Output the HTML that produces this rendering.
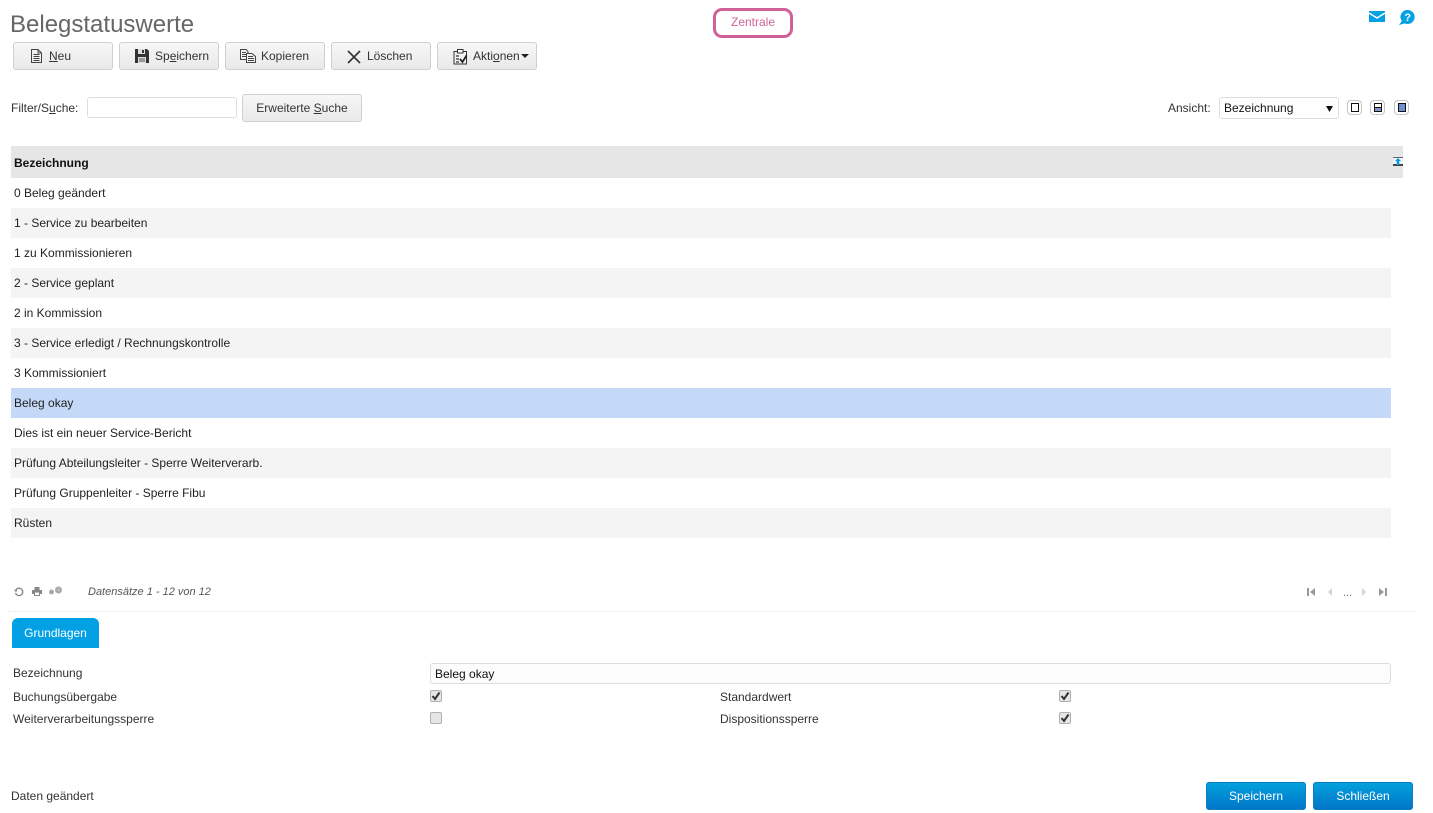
<!DOCTYPE html>
<html lang="de"><head><meta charset="utf-8"><title>Belegstatuswerte</title>
<style>
html,body{margin:0;padding:0;background:#fff}
body{width:1433px;height:813px;position:relative;overflow:hidden;font:12px/14px "Liberation Sans",Arial,sans-serif;color:#222}
.a{position:absolute;white-space:nowrap}
svg{position:absolute;display:block}
.btn{position:absolute;top:42px;width:98px;height:26px;border:1px solid #d0d0d0;border-radius:3px;background:linear-gradient(#f7f7f7,#e9e9e9);color:#333}
.btn span{position:absolute;top:6px;white-space:nowrap}
.row{position:absolute;left:11px;width:1380px;height:30px;line-height:30px;text-indent:3px;color:#222}
.g{background:#f4f4f4}
.vb{position:absolute;top:100px;width:13px;height:13px;border:1px solid #c4c4c4;border-radius:4px;background:#fff}
.vb i{position:absolute;left:2px;top:2px;width:7px;height:7px;border:1px solid #111;display:block}
.cb{position:absolute;width:10px;height:10px;border:1px solid #b0b0b0;border-radius:2px;background:#e6e6e6}
.cb svg{left:0;top:0}
.pri{position:absolute;top:782px;width:98px;height:26px;border:1px solid #0a7cc4;border-radius:3px;background:linear-gradient(#03a1dc,#0175c8);color:#fff;text-align:center;line-height:26px}
u{text-decoration:underline}
</style></head><body>
<div class="a" style="left:10px;top:11px;font-size:24px;line-height:28px;color:#666">Belegstatuswerte</div>
<div class="a" style="left:713px;top:8px;width:74px;height:24px;border:3px solid #cf6198;border-radius:9px;text-align:center;line-height:23px;color:#cf6198">Zentrale</div>

<svg style="left:1369px;top:11px" width="16" height="11" viewBox="0 0 16 11"><rect width="16" height="11" fill="#04a0e4"/><path d="M0 2L8 7L16 2" fill="none" stroke="#fff" stroke-width="1.500"/></svg>
<svg style="left:1398px;top:10px" width="17" height="15" viewBox="0 0 17 15"><path d="M9.800 0a7 7 0 1 1-3 13.400L1 15l2.800-3.900A7 7 0 0 1 9.800 0z" fill="#04a0e4"/><text x="9.800" y="11" text-anchor="middle" font-family="Liberation Sans" font-size="11" font-weight="bold" fill="#fff">?</text></svg>

<div class="btn" style="left:13px"><svg style="left:17px;top:6px" width="11" height="14" viewBox="0 0 11 14"><path d="M.5 .5H7L10.500 4V13.500H.5ZM7 .5V4H10.500M2.500 5.500H8.500M2.500 7.500H8.500M2.500 9.500H8.500M2.500 11.500H8.500" fill="none" stroke="#444"/></svg><span style="left:35px"><u>N</u>eu</span></div>
<div class="btn" style="left:119px"><svg style="left:15px;top:6px" width="14" height="14" viewBox="0 0 14 14"><path d="M0 0H12L14 2V14H0Z" fill="#333"/><rect x="3" y="0" width="7" height="5" fill="#ddd"/><rect x="7" y="1" width="2" height="3" fill="#333"/><rect x="3" y="8" width="8" height="6" fill="#ddd"/><path d="M4 10H10M4 12H10" stroke="#555"/></svg><span style="left:35px">Sp<u>e</u>ichern</span></div>
<div class="btn" style="left:225px"><svg style="left:14px;top:6px" width="16" height="14" viewBox="0 0 16 14"><path d="M.5.500H6L8 2.500V10.500H.5ZM2 3.500H6M2 5.500H6M2 7.500H6" fill="#f3f3f3" stroke="#444"/><path d="M6.500 4.500H12L15.500 7.500V13.500H6.500ZM8 7.500H13M8 9.500H14M8 11.500H14" fill="#f3f3f3" stroke="#444"/></svg><span style="left:35px">Kopieren</span></div>
<div class="btn" style="left:331px"><svg style="left:15px;top:7px" width="14" height="14" viewBox="0 0 14 14"><path d="M1 1L13 13M13 1L1 13" fill="none" stroke="#333" stroke-width="1.600"/></svg><span style="left:35px">Löschen</span></div>
<div class="btn" style="left:437px"><svg style="left:15px;top:5px" width="15" height="17" viewBox="0 0 15 17"><path d="M1 3.500H13.500V16H1Z" fill="#f3f3f3" stroke="#333"/><path d="M4.500 1.500H10V5H4.500Z" fill="#fff" stroke="#333"/><path d="M3 8H6M3 11H6M3 14H6" stroke="#333" stroke-width="1.200"/><path d="M7 11L9.500 14L13.500 7.500" fill="none" stroke="#222" stroke-width="1.800"/></svg><span style="left:35px">Akti<u>o</u>nen</span><svg style="left:83px;top:11px" width="8" height="4" viewBox="0 0 8 4"><path d="M0 0H8L4 4Z" fill="#222"/></svg></div>

<div class="a" style="left:11px;top:101px;color:#333">Filter/S<u>u</u>che:</div>
<div class="a" style="left:87px;top:97px;width:148px;height:19px;border:1px solid #ddd;border-radius:3px;background:#fff"></div>
<div class="btn" style="left:242px;top:94px;width:118px;height:26px;text-align:center;line-height:26px">Erweiterte <u>S</u>uche</div>

<div class="a" style="left:1168px;top:101px;color:#333">Ansicht:</div>
<div class="a" style="left:1219px;top:97px;width:118px;height:20px;border:1px solid #ddd;border-radius:3px;line-height:20px;text-indent:4px;color:#111">Bezeichnung<svg style="left:106px;top:8px" width="7" height="6" viewBox="0 0 7 6"><path d="M0 0H7L3.500 6Z" fill="#111"/></svg></div>
<div class="vb" style="left:1347px"><i style="left:3px;width:6px"></i></div>
<div class="vb" style="left:1370px"><i style="left:3px;width:6px;background:linear-gradient(#fff 0 40%,#111 40% 55%,#7d97c8 55%)"></i></div>
<div class="vb" style="left:1394px"><i style="left:3px;width:6px;background:#6f90cc"></i></div>

<div class="a" style="left:11px;top:146px;width:1392px;height:32px;background:#e6e6e6"></div>
<div class="a" style="left:14px;top:156px;font-weight:bold;color:#111">Bezeichnung</div>
<svg style="left:1393px;top:157px" width="10" height="9" viewBox="0 0 10 9"><rect width="10" height="1" fill="#666"/><rect y="1" width="10" height="6" fill="#eef6fb"/><rect y="7" width="10" height="2" fill="#444"/><path d="M5 1L8 4H6.300V8H3.700V4H2Z" fill="#0a9be0"/></svg>

<div class="row" style="top:178px">0 Beleg geändert</div>
<div class="row g" style="top:208px">1 - Service zu bearbeiten</div>
<div class="row" style="top:238px">1 zu Kommissionieren</div>
<div class="row g" style="top:268px">2 - Service geplant</div>
<div class="row" style="top:298px">2 in Kommission</div>
<div class="row g" style="top:328px">3 - Service erledigt / Rechnungskontrolle</div>
<div class="row" style="top:358px">3 Kommissioniert</div>
<div class="row" style="top:388px;background:#c4d9f7">Beleg okay</div>
<div class="row" style="top:418px">Dies ist ein neuer Service-Bericht</div>
<div class="row g" style="top:448px">Prüfung Abteilungsleiter - Sperre Weiterverarb.</div>
<div class="row" style="top:478px">Prüfung Gruppenleiter - Sperre Fibu</div>
<div class="row g" style="top:508px">Rüsten</div>

<svg style="left:14px;top:587px" width="10" height="10" viewBox="0 0 10 10"><path d="M2.200 2.500A3.700 3.700 0 1 1 1.500 6" fill="none" stroke="#888" stroke-width="1.300"/><path d="M0 2.500H3.500L2 5.500Z" fill="#888"/></svg>
<svg style="left:32px;top:587px" width="10" height="9" viewBox="0 0 10 9"><path d="M2.500 0H7.500V3H10V7H8V9H2V7H0V3H2.500Z" fill="#888"/><rect x="3" y="5.500" width="4" height="2.500" fill="#fff"/></svg>
<svg style="left:49px;top:586px" width="14" height="10" viewBox="0 0 14 10"><circle cx="2.500" cy="6" r="2.500" fill="#aaa"/><circle cx="9.500" cy="4" r="3.500" fill="#aaa"/><circle cx="9.500" cy="4" r="1" fill="#ccc"/></svg>
<div class="a" style="left:88px;top:585px;font-size:11px;font-style:italic;color:#555">Datensätze 1 - 12 von 12</div>
<svg style="left:1306px;top:588px" width="84" height="9" viewBox="0 0 84 9"><path d="M1 0H3V8H1ZM9 0V8L4 4Z" fill="#999"/><path d="M26 0V8L22 4Z" fill="#d4d4d4"/><path d="M56 0V8L60 4Z" fill="#d4d4d4"/><path d="M73 0V8L78 4ZM79 0H81V8H79Z" fill="#999"/></svg>
<div class="a" style="left:1343px;top:586px;font-size:11px;color:#777">...</div>

<div class="a" style="left:8px;top:611px;width:1408px;border-top:1px dotted #e6e6e6"></div>

<div class="a" style="left:12px;top:618px;width:87px;height:30px;background:#04a0e4;border-radius:6px 6px 0 0;color:#fff;text-align:center;line-height:30px">Grundlagen</div>

<div class="a" style="left:13px;top:666px;color:#333">Bezeichnung</div>
<div class="a" style="left:430px;top:663px;width:959px;height:19px;border:1px solid #ddd;border-radius:3px;background:#fcfcfc;line-height:20px;text-indent:4px;color:#111">Beleg okay</div>
<div class="a" style="left:13px;top:690px;color:#333">Buchungsübergabe</div>
<div class="a" style="left:13px;top:712px;color:#333">Weiterverarbeitungssperre</div>
<div class="a" style="left:720px;top:690px;color:#333">Standardwert</div>
<div class="a" style="left:720px;top:712px;color:#333">Dispositionssperre</div>
<div class="cb" style="left:430px;top:690px"><svg width="10" height="10" viewBox="0 0 10 10"><path d="M1.500 5L4 8L8.500 1.500" fill="none" stroke="#333" stroke-width="2"/></svg></div>
<div class="cb" style="left:430px;top:712px"></div>
<div class="cb" style="left:1059px;top:690px"><svg width="10" height="10" viewBox="0 0 10 10"><path d="M1.500 5L4 8L8.500 1.500" fill="none" stroke="#333" stroke-width="2"/></svg></div>
<div class="cb" style="left:1059px;top:712px"><svg width="10" height="10" viewBox="0 0 10 10"><path d="M1.500 5L4 8L8.500 1.500" fill="none" stroke="#333" stroke-width="2"/></svg></div>

<div class="a" style="left:11px;top:789px;color:#333">Daten geändert</div>
<div class="pri" style="left:1206px">Speichern</div>
<div class="pri" style="left:1313px">Schließen</div>
</body></html>
